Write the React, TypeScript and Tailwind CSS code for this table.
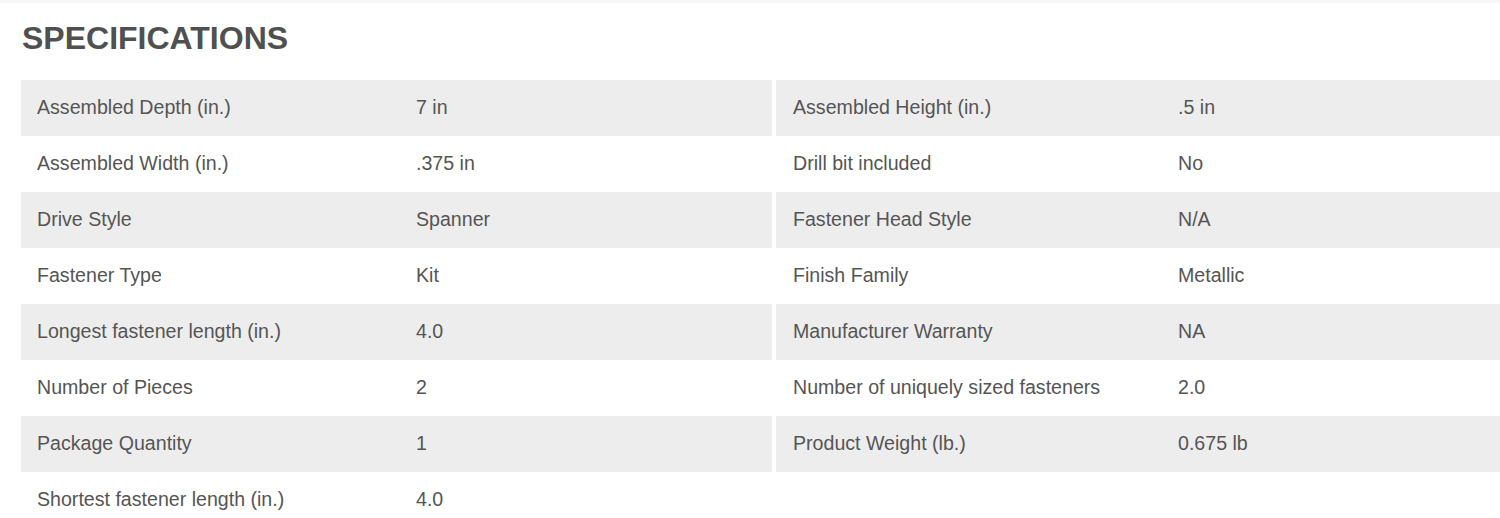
const specs: [string, string][] = [
  ['Assembled Depth (in.)', '7 in'],
  ['Assembled Height (in.)', '.5 in'],
  ['Assembled Width (in.)', '.375 in'],
  ['Drill bit included', 'No'],
  ['Drive Style', 'Spanner'],
  ['Fastener Head Style', 'N/A'],
  ['Fastener Type', 'Kit'],
  ['Finish Family', 'Metallic'],
  ['Longest fastener length (in.)', '4.0'],
  ['Manufacturer Warranty', 'NA'],
  ['Number of Pieces', '2'],
  ['Number of uniquely sized fasteners', '2.0'],
  ['Package Quantity', '1'],
  ['Product Weight (lb.)', '0.675 lb'],
  ['Shortest fastener length (in.)', '4.0'],
];

export default function App() {
  return (
    <div className="w-[1500px] h-[518px] overflow-hidden bg-white font-['Liberation_Sans',Arial,sans-serif] text-[#555]">
      <div className="h-[3px] bg-[#f7f7f7]" />
      <h2 className="mt-[19px] ml-[22px] text-[32px] font-bold leading-none text-[#505050]">SPECIFICATIONS</h2>
      <div className="mt-[26px] ml-[21px] grid grid-cols-[751px_724px] gap-x-[4px]">
        {specs.map(([label, value], i) => {
          const row = Math.floor(i / 2);
          const right = i % 2 === 1;
          return (
            <div
              key={label}
              className={`flex h-[56px] items-center text-[19.6px] ${row % 2 === 0 ? 'bg-[#ededed]' : 'bg-white'} ${right ? 'pl-[17px]' : 'pl-[16px]'}`}
            >
              <span className={right ? 'w-[385px]' : 'w-[379px]'}>{label}</span>
              <span>{value}</span>
            </div>
          );
        })}
      </div>
    </div>
  );
}
